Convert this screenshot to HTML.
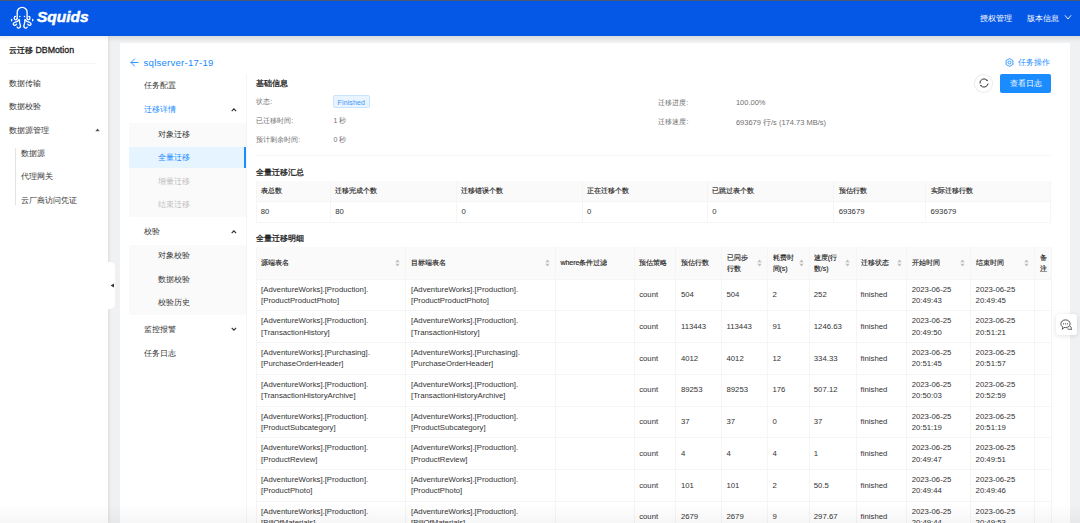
<!DOCTYPE html>
<html><head><meta charset="utf-8"><style>
*{box-sizing:border-box;margin:0;padding:0}
html,body{width:1080px;height:523px;overflow:hidden;background:#eff1f3;font-family:"Liberation Sans",sans-serif;color:#333}
.a{position:absolute;white-space:nowrap}
.vl{position:absolute;width:1px;background:#efefef}
.hl{position:absolute;height:1px;background:#efefef}
</style></head><body>
<div class="a" style="left:0.00px;top:0.00px;width:1080.00px;height:1.00px;background:#4a5878;"></div>
<div class="a" style="left:0.00px;top:1.00px;width:1080.00px;height:35.00px;background:#0558e6;"></div>
<svg class="a" style="left:8px;top:4px" width="30" height="28" viewBox="0 0 30 28" fill="none" stroke="#fff" stroke-width="1.35" stroke-linecap="round" stroke-linejoin="round">
<path d="M9.2 14.3 V8.3 A4.95 4.95 0 0 1 19.1 8.3 V14.3"/>
<circle cx="11.8" cy="12.6" r="0.75" fill="#fff" stroke="none"/><circle cx="16.5" cy="12.6" r="0.75" fill="#fff" stroke="none"/>
<path d="M9.2 14.3 C9.2 15.3 8.6 15.8 7.7 15.8 C6.9 15.8 6.3 15.1 6.3 14.1 C6.3 13.2 6.8 12.4 7.5 12.4"/>
<path d="M3.6 15.4 L3.6 16.8"/>
<path d="M10.9 15.8 C10.4 17.0 9.2 17.8 7.4 18.2 C5.8 18.6 5.0 19.5 5.3 20.4 C5.6 21.3 6.6 21.5 7.4 21.2 C8.1 20.9 8.4 20.5 8.5 20.1"/>
<path d="M11.5 15.9 C11.3 17.6 11.3 19.0 12.0 20.3 C12.6 21.5 12.6 23.0 11.6 23.8 C10.8 24.4 9.6 24.2 9.2 23.2"/>
<path d="M 19.10 14.30 C 19.10 15.30 19.70 15.80 20.60 15.80 C 21.40 15.80 22.00 15.10 22.00 14.10 C 22.00 13.20 21.50 12.40 20.80 12.40"/>
<path d="M 24.70 15.40 L 24.70 16.80"/>
<path d="M 17.40 15.80 C 17.90 17.00 19.10 17.80 20.90 18.20 C 22.50 18.60 23.30 19.50 23.00 20.40 C 22.70 21.30 21.70 21.50 20.90 21.20 C 20.20 20.90 19.90 20.50 19.80 20.10"/>
<path d="M 16.80 15.90 C 17.00 17.60 17.00 19.00 16.30 20.30 C 15.70 21.50 15.70 23.00 16.70 23.80 C 17.50 24.40 18.70 24.20 19.10 23.20"/>
</svg>
<div class="a" style="left:37px;top:7px;font-size:15.5px;line-height:20px;font-weight:700;font-style:italic;color:#fff;letter-spacing:0px;-webkit-text-stroke:0.5px #fff">Squids</div>
<div class="a" style="left:979.50px;top:14.07px;font-size:8.2px;line-height:10.25px;color:#fff;font-weight:400;">授权管理</div>
<div class="a" style="left:1026.50px;top:14.07px;font-size:8.2px;line-height:10.25px;color:#fff;font-weight:400;">版本信息</div>
<svg class="a" style="left:1064px;top:14px" width="8" height="7" viewBox="0 0 8 7"><path d="M0.9 1.3 L4 5 L7.1 1.3" stroke="#fff" stroke-width="0.9" fill="none"/></svg>
<div class="a" style="left:0.00px;top:36.00px;width:1080.00px;height:6.00px;background:linear-gradient(rgba(0,0,0,.09),rgba(0,0,0,0));"></div>
<div class="a" style="left:0;top:36px;width:108px;height:487px;background:#fff;box-shadow:1px 0 3px rgba(0,0,0,.09)"></div>
<div class="a" style="left:0.00px;top:36.00px;width:108.00px;height:5.00px;background:linear-gradient(rgba(0,0,0,.07),rgba(0,0,0,0));"></div>
<div class="a" style="left:9.20px;top:45.00px;font-size:8px;line-height:10.00px;color:#1f1f1f;font-weight:400;-webkit-text-stroke:0.3px #1f1f1f">云迁移 <span style='font-size:8.8px'>DBMotion</span></div>
<div class="a" style="left:9.20px;top:63.00px;width:86.80px;height:1.00px;background:#f5f5f5;"></div>
<div class="a" style="left:9.20px;top:78.50px;font-size:8px;line-height:10.00px;color:#333;font-weight:400;">数据传输</div>
<div class="a" style="left:9.20px;top:102.20px;font-size:8px;line-height:10.00px;color:#333;font-weight:400;">数据校验</div>
<div class="a" style="left:9.20px;top:125.60px;font-size:8px;line-height:10.00px;color:#333;font-weight:400;">数据源管理</div>
<svg class="a" style="left:94.5px;top:127.5px" width="5" height="4" viewBox="0 0 5 4"><path d="M0.3 3.2 L2.5 0.6 L4.7 3.2 Z" fill="#555"/></svg>
<div class="a" style="left:15.00px;top:147.50px;width:1.00px;height:57.50px;background:#e4e4e4;"></div>
<div class="a" style="left:21.00px;top:148.80px;font-size:8px;line-height:10.00px;color:#333;font-weight:400;">数据源</div>
<div class="a" style="left:21.00px;top:172.40px;font-size:8px;line-height:10.00px;color:#333;font-weight:400;">代理网关</div>
<div class="a" style="left:21.00px;top:195.60px;font-size:8px;line-height:10.00px;color:#333;font-weight:400;">云厂商访问凭证</div>
<div class="a" style="left:107px;top:262px;width:8px;height:47px;background:#fff;border-radius:0 5px 5px 0"></div>
<svg class="a" style="left:109.5px;top:283px" width="5" height="5" viewBox="0 0 5 5"><path d="M4 0.4 L0.6 2.5 L4 4.6 Z" fill="#333"/></svg>
<div class="a" style="left:120.00px;top:43.40px;width:950.00px;height:479.60px;background:#fff;"></div>
<svg class="a" style="left:129.5px;top:57.5px" width="9" height="9" viewBox="0 0 9 9" fill="none" stroke="#1a8cff" stroke-width="0.9" stroke-linecap="round"><path d="M8.1 4.5 H1.2 M4.5 1.0 L1.0 4.5 L4.5 8.0"/></svg>
<div class="a" style="left:143.60px;top:56.60px;font-size:9.6px;line-height:12.00px;color:#1a8cff;font-weight:400;letter-spacing:0.22px">sqlserver-17-19</div>
<div class="a" style="left:246.30px;top:74.30px;width:1.00px;height:448.70px;background:#f5f5f5;"></div>
<div class="a" style="left:143.60px;top:80.80px;font-size:8px;line-height:10.00px;color:#333;font-weight:400;">任务配置</div>
<div class="a" style="left:143.60px;top:105.20px;font-size:8px;line-height:10.00px;color:#1a8cff;font-weight:400;">迁移详情</div>
<svg class="a" style="left:230.5px;top:106.5px" width="6" height="6" viewBox="0 0 6 6"><path d="M0.7 4.1 L2.9 1.9 L5.1 4.1" stroke="#333" stroke-width="1.2" fill="none"/></svg>
<div class="a" style="left:129.20px;top:123.00px;width:117.10px;height:93.70px;background:#fafafa;"></div>
<div class="a" style="left:157.70px;top:129.70px;font-size:8px;line-height:10.00px;color:#333;font-weight:400;">对象迁移</div>
<div class="a" style="left:129.20px;top:146.50px;width:117.10px;height:21.10px;background:#e6f4ff;"></div>
<div class="a" style="left:244.30px;top:146.50px;width:2.00px;height:21.10px;background:#1a8cff;"></div>
<div class="a" style="left:157.70px;top:153.00px;font-size:8px;line-height:10.00px;color:#1a8cff;font-weight:400;">全量迁移</div>
<div class="a" style="left:157.70px;top:176.60px;font-size:8px;line-height:10.00px;color:#c0c0c0;font-weight:400;">增量迁移</div>
<div class="a" style="left:157.70px;top:199.90px;font-size:8px;line-height:10.00px;color:#c0c0c0;font-weight:400;">结束迁移</div>
<div class="a" style="left:143.90px;top:227.40px;font-size:8px;line-height:10.00px;color:#333;font-weight:400;">校验</div>
<svg class="a" style="left:230.5px;top:228.6px" width="6" height="6" viewBox="0 0 6 6"><path d="M0.7 4.1 L2.9 1.9 L5.1 4.1" stroke="#333" stroke-width="1.2" fill="none"/></svg>
<div class="a" style="left:129.20px;top:245.20px;width:117.10px;height:69.40px;background:#fafafa;"></div>
<div class="a" style="left:158.20px;top:251.30px;font-size:8px;line-height:10.00px;color:#333;font-weight:400;">对象校验</div>
<div class="a" style="left:158.20px;top:274.80px;font-size:8px;line-height:10.00px;color:#333;font-weight:400;">数据校验</div>
<div class="a" style="left:158.20px;top:297.70px;font-size:8px;line-height:10.00px;color:#333;font-weight:400;">校验历史</div>
<div class="a" style="left:143.90px;top:324.70px;font-size:8px;line-height:10.00px;color:#333;font-weight:400;">监控报警</div>
<svg class="a" style="left:230.5px;top:325.5px" width="6" height="6" viewBox="0 0 6 6"><path d="M0.7 1.9 L2.9 4.1 L5.1 1.9" stroke="#333" stroke-width="1.2" fill="none"/></svg>
<div class="a" style="left:143.90px;top:349.10px;font-size:8px;line-height:10.00px;color:#333;font-weight:400;">任务日志</div>
<div class="a" style="left:256.30px;top:79.20px;font-size:8px;line-height:10.00px;color:#1f1f1f;font-weight:400;-webkit-text-stroke:0.3px #1f1f1f">基础信息</div>
<div class="a" style="left:256.30px;top:98.42px;font-size:7px;line-height:8.75px;color:#707070;font-weight:400;">状态:</div>
<div class="a" style="left:256.30px;top:117.03px;font-size:7px;line-height:8.75px;color:#707070;font-weight:400;">已迁移时间:</div>
<div class="a" style="left:256.30px;top:135.62px;font-size:7px;line-height:8.75px;color:#707070;font-weight:400;">预计剩余时间:</div>
<div class="a" style="left:333px;top:95.3px;width:37px;height:12.5px;background:#e8f4ff;border:1px solid #c9e4ff;border-radius:2px"></div>
<div class="a" style="left:337.60px;top:98.53px;font-size:7px;line-height:8.75px;color:#3d95fb;font-weight:400;letter-spacing:0.12px">Finished</div>
<div class="a" style="left:333.50px;top:117.03px;font-size:7px;line-height:8.75px;color:#707070;font-weight:400;">1 秒</div>
<div class="a" style="left:333.50px;top:135.62px;font-size:7px;line-height:8.75px;color:#707070;font-weight:400;">0 秒</div>
<div class="a" style="left:658.40px;top:98.92px;font-size:7px;line-height:8.75px;color:#707070;font-weight:400;">迁移进度:</div>
<div class="a" style="left:735.90px;top:97.61px;font-size:7.5px;line-height:9.38px;color:#707070;font-weight:400;">100.00%</div>
<div class="a" style="left:658.40px;top:117.92px;font-size:7px;line-height:8.75px;color:#707070;font-weight:400;">迁移速度:</div>
<div class="a" style="left:735.90px;top:117.61px;font-size:7.5px;line-height:9.38px;color:#707070;font-weight:400;">693679 行/s (174.73 MB/s)</div>
<svg class="a" style="left:1004.5px;top:57.8px" width="9" height="9" viewBox="0 0 9 9" fill="none" stroke="#1a8cff" stroke-width="0.85">
<path d="M4.5 0.6 L7.9 2.5 L7.9 6.5 L4.5 8.4 L1.1 6.5 L1.1 2.5 Z"/><circle cx="4.5" cy="4.5" r="1.5"/></svg>
<div class="a" style="left:1018.30px;top:58.40px;font-size:8px;line-height:10.00px;color:#1a8cff;font-weight:400;">任务操作</div>
<div class="a" style="left:974.2px;top:74px;width:19.3px;height:18.6px;border:1px solid #ececec;border-radius:50%;background:#fff"></div>
<svg class="a" style="left:979px;top:78.4px" width="10" height="10" viewBox="0 0 10 10" fill="none" stroke="#2a2a2a" stroke-width="0.95">
<path d="M0.94 5.57 A4.1 4.1 0 0 1 8.23 2.48"/><path d="M9.06 5.57 A4.1 4.1 0 0 1 1.77 7.52"/>
<circle cx="8.13" cy="2.38" r="0.7" fill="#2a2a2a" stroke="none"/><circle cx="1.87" cy="7.62" r="0.7" fill="#2a2a2a" stroke="none"/></svg>
<div class="a" style="left:1000.2px;top:74.1px;width:50.6px;height:18.9px;background:#1a8cff;border-radius:2px"></div>
<div class="a" style="left:1009.70px;top:79.40px;font-size:8px;line-height:10.00px;color:#fff;font-weight:400;">查看日志</div>
<div class="a" style="left:256.00px;top:155.00px;width:795.00px;height:1.00px;background:#f5f5f5;"></div>
<div class="a" style="left:256.00px;top:168.00px;font-size:8px;line-height:10.00px;color:#1f1f1f;font-weight:400;-webkit-text-stroke:0.3px #1f1f1f">全量迁移汇总</div>
<div class="a" style="left:256.00px;top:181.00px;width:795.00px;height:20.70px;background:#fafafa;"></div>
<div class="a" style="left:256.00px;top:201.20px;width:795.00px;height:1.00px;background:#f5f5f5;"></div>
<div class="a" style="left:256.00px;top:221.60px;width:795.00px;height:1.00px;background:#f5f5f5;"></div>
<div class="a" style="left:256.00px;top:181.00px;width:1.00px;height:41.60px;background:#f5f5f5;"></div>
<div class="a" style="left:1050.00px;top:181.00px;width:1.00px;height:41.60px;background:#f5f5f5;"></div>
<div class="a" style="left:330.00px;top:181.00px;width:1.00px;height:41.60px;background:#f5f5f5;"></div>
<div class="a" style="left:456.10px;top:181.00px;width:1.00px;height:41.60px;background:#f5f5f5;"></div>
<div class="a" style="left:581.80px;top:181.00px;width:1.00px;height:41.60px;background:#f5f5f5;"></div>
<div class="a" style="left:707.00px;top:181.00px;width:1.00px;height:41.60px;background:#f5f5f5;"></div>
<div class="a" style="left:833.40px;top:181.00px;width:1.00px;height:41.60px;background:#f5f5f5;"></div>
<div class="a" style="left:925.20px;top:181.00px;width:1.00px;height:41.60px;background:#f5f5f5;"></div>
<div class="a" style="left:260.80px;top:187.22px;font-size:7px;line-height:8.75px;color:#262626;font-weight:400;-webkit-text-stroke:0.15px #262626">表总数</div>
<div class="a" style="left:260.80px;top:207.16px;font-size:7.75px;line-height:9.69px;color:#333;font-weight:400;">80</div>
<div class="a" style="left:335.30px;top:187.22px;font-size:7px;line-height:8.75px;color:#262626;font-weight:400;-webkit-text-stroke:0.15px #262626">迁移完成个数</div>
<div class="a" style="left:335.30px;top:207.16px;font-size:7.75px;line-height:9.69px;color:#333;font-weight:400;">80</div>
<div class="a" style="left:461.40px;top:187.22px;font-size:7px;line-height:8.75px;color:#262626;font-weight:400;-webkit-text-stroke:0.15px #262626">迁移错误个数</div>
<div class="a" style="left:461.40px;top:207.16px;font-size:7.75px;line-height:9.69px;color:#333;font-weight:400;">0</div>
<div class="a" style="left:587.10px;top:187.22px;font-size:7px;line-height:8.75px;color:#262626;font-weight:400;-webkit-text-stroke:0.15px #262626">正在迁移个数</div>
<div class="a" style="left:587.10px;top:207.16px;font-size:7.75px;line-height:9.69px;color:#333;font-weight:400;">0</div>
<div class="a" style="left:712.30px;top:187.22px;font-size:7px;line-height:8.75px;color:#262626;font-weight:400;-webkit-text-stroke:0.15px #262626">已跳过表个数</div>
<div class="a" style="left:712.30px;top:207.16px;font-size:7.75px;line-height:9.69px;color:#333;font-weight:400;">0</div>
<div class="a" style="left:838.70px;top:187.22px;font-size:7px;line-height:8.75px;color:#262626;font-weight:400;-webkit-text-stroke:0.15px #262626">预估行数</div>
<div class="a" style="left:838.70px;top:207.16px;font-size:7.75px;line-height:9.69px;color:#333;font-weight:400;">693679</div>
<div class="a" style="left:930.50px;top:187.22px;font-size:7px;line-height:8.75px;color:#262626;font-weight:400;-webkit-text-stroke:0.15px #262626">实际迁移行数</div>
<div class="a" style="left:930.50px;top:207.16px;font-size:7.75px;line-height:9.69px;color:#333;font-weight:400;">693679</div>
<div class="a" style="left:256.00px;top:234.00px;font-size:8px;line-height:10.00px;color:#1f1f1f;font-weight:400;-webkit-text-stroke:0.3px #1f1f1f">全量迁移明细</div>
<div class="a" style="left:256.00px;top:246.90px;width:795.00px;height:32.20px;background:#fafafa;"></div>
<div class="a" style="left:256.00px;top:278.60px;width:795.00px;height:1.00px;background:#f5f5f5;"></div>
<div class="a" style="left:256.00px;top:310.35px;width:795.00px;height:1.00px;background:#f5f5f5;"></div>
<div class="a" style="left:256.00px;top:342.10px;width:795.00px;height:1.00px;background:#f5f5f5;"></div>
<div class="a" style="left:256.00px;top:373.85px;width:795.00px;height:1.00px;background:#f5f5f5;"></div>
<div class="a" style="left:256.00px;top:405.60px;width:795.00px;height:1.00px;background:#f5f5f5;"></div>
<div class="a" style="left:256.00px;top:437.35px;width:795.00px;height:1.00px;background:#f5f5f5;"></div>
<div class="a" style="left:256.00px;top:469.10px;width:795.00px;height:1.00px;background:#f5f5f5;"></div>
<div class="a" style="left:256.00px;top:500.85px;width:795.00px;height:1.00px;background:#f5f5f5;"></div>
<div class="a" style="left:256.00px;top:532.60px;width:795.00px;height:1.00px;background:#f5f5f5;"></div>
<div class="a" style="left:255.50px;top:246.90px;width:1.00px;height:276.10px;background:#f5f5f5;"></div>
<div class="a" style="left:405.10px;top:246.90px;width:1.00px;height:276.10px;background:#f5f5f5;"></div>
<div class="a" style="left:555.10px;top:246.90px;width:1.00px;height:276.10px;background:#f5f5f5;"></div>
<div class="a" style="left:633.50px;top:246.90px;width:1.00px;height:276.10px;background:#f5f5f5;"></div>
<div class="a" style="left:675.10px;top:246.90px;width:1.00px;height:276.10px;background:#f5f5f5;"></div>
<div class="a" style="left:720.90px;top:246.90px;width:1.00px;height:276.10px;background:#f5f5f5;"></div>
<div class="a" style="left:766.80px;top:246.90px;width:1.00px;height:276.10px;background:#f5f5f5;"></div>
<div class="a" style="left:808.50px;top:246.90px;width:1.00px;height:276.10px;background:#f5f5f5;"></div>
<div class="a" style="left:855.90px;top:246.90px;width:1.00px;height:276.10px;background:#f5f5f5;"></div>
<div class="a" style="left:905.70px;top:246.90px;width:1.00px;height:276.10px;background:#f5f5f5;"></div>
<div class="a" style="left:969.60px;top:246.90px;width:1.00px;height:276.10px;background:#f5f5f5;"></div>
<div class="a" style="left:1033.50px;top:246.90px;width:1.00px;height:276.10px;background:#f5f5f5;"></div>
<div class="a" style="left:1050.50px;top:246.90px;width:1.00px;height:276.10px;background:#f5f5f5;"></div>
<div class="a" style="left:261.10px;top:259.12px;font-size:7px;line-height:8.75px;color:#262626;font-weight:400;-webkit-text-stroke:0.15px #262626">源端表名</div>
<svg class="a" style="left:394.9px;top:259.1px" width="5" height="8" viewBox="0 0 5 8"><path d="M0.3 3.3 L2.5 0.5 L4.7 3.3 Z M0.3 4.7 L2.5 7.5 L4.7 4.7 Z" fill="#bfbfbf"/></svg>
<div class="a" style="left:411.00px;top:259.12px;font-size:7px;line-height:8.75px;color:#262626;font-weight:400;-webkit-text-stroke:0.15px #262626">目标端表名</div>
<svg class="a" style="left:544.5px;top:259.1px" width="5" height="8" viewBox="0 0 5 8"><path d="M0.3 3.3 L2.5 0.5 L4.7 3.3 Z M0.3 4.7 L2.5 7.5 L4.7 4.7 Z" fill="#bfbfbf"/></svg>
<div class="a" style="left:560.40px;top:259.12px;font-size:7px;line-height:8.75px;color:#262626;font-weight:400;-webkit-text-stroke:0.15px #262626">where条件过滤</div>
<div class="a" style="left:639.20px;top:259.12px;font-size:7px;line-height:8.75px;color:#262626;font-weight:400;-webkit-text-stroke:0.15px #262626">预估策略</div>
<div class="a" style="left:680.90px;top:259.12px;font-size:7px;line-height:8.75px;color:#262626;font-weight:400;-webkit-text-stroke:0.15px #262626">预估行数</div>
<div class="a" style="left:726.50px;top:251.50px;font-size:7px;line-height:11.2px;color:#262626;-webkit-text-stroke:0.15px #262626">已同步<br>行数</div>
<svg class="a" style="left:757.1px;top:259.1px" width="5" height="8" viewBox="0 0 5 8"><path d="M0.3 3.3 L2.5 0.5 L4.7 3.3 Z M0.3 4.7 L2.5 7.5 L4.7 4.7 Z" fill="#bfbfbf"/></svg>
<div class="a" style="left:772.50px;top:251.50px;font-size:7px;line-height:11.2px;color:#262626;-webkit-text-stroke:0.15px #262626">耗费时<br>间(s)</div>
<svg class="a" style="left:798.5px;top:259.1px" width="5" height="8" viewBox="0 0 5 8"><path d="M0.3 3.3 L2.5 0.5 L4.7 3.3 Z M0.3 4.7 L2.5 7.5 L4.7 4.7 Z" fill="#bfbfbf"/></svg>
<div class="a" style="left:813.80px;top:251.50px;font-size:7px;line-height:11.2px;color:#262626;-webkit-text-stroke:0.15px #262626">速度(行<br>数/s)</div>
<svg class="a" style="left:845.4px;top:259.1px" width="5" height="8" viewBox="0 0 5 8"><path d="M0.3 3.3 L2.5 0.5 L4.7 3.3 Z M0.3 4.7 L2.5 7.5 L4.7 4.7 Z" fill="#bfbfbf"/></svg>
<div class="a" style="left:860.60px;top:259.12px;font-size:7px;line-height:8.75px;color:#262626;font-weight:400;-webkit-text-stroke:0.15px #262626">迁移状态</div>
<svg class="a" style="left:896.5px;top:259.1px" width="5" height="8" viewBox="0 0 5 8"><path d="M0.3 3.3 L2.5 0.5 L4.7 3.3 Z M0.3 4.7 L2.5 7.5 L4.7 4.7 Z" fill="#bfbfbf"/></svg>
<div class="a" style="left:911.70px;top:259.12px;font-size:7px;line-height:8.75px;color:#262626;font-weight:400;-webkit-text-stroke:0.15px #262626">开始时间</div>
<svg class="a" style="left:960.3px;top:259.1px" width="5" height="8" viewBox="0 0 5 8"><path d="M0.3 3.3 L2.5 0.5 L4.7 3.3 Z M0.3 4.7 L2.5 7.5 L4.7 4.7 Z" fill="#bfbfbf"/></svg>
<div class="a" style="left:975.60px;top:259.12px;font-size:7px;line-height:8.75px;color:#262626;font-weight:400;-webkit-text-stroke:0.15px #262626">结束时间</div>
<svg class="a" style="left:1024.2px;top:259.1px" width="5" height="8" viewBox="0 0 5 8"><path d="M0.3 3.3 L2.5 0.5 L4.7 3.3 Z M0.3 4.7 L2.5 7.5 L4.7 4.7 Z" fill="#bfbfbf"/></svg>
<div class="a" style="left:1039.50px;top:251.50px;font-size:7px;line-height:11.2px;color:#262626;-webkit-text-stroke:0.15px #262626">备<br>注</div>
<div class="a" style="left:261.10px;top:283.68px;font-size:7.75px;line-height:11.2px;color:#333">[AdventureWorks].[Production].<br>[ProductProductPhoto]</div>
<div class="a" style="left:411.00px;top:283.68px;font-size:7.75px;line-height:11.2px;color:#333">[AdventureWorks].[Production].<br>[ProductProductPhoto]</div>
<div class="a" style="left:639.20px;top:290.03px;font-size:7.75px;line-height:9.69px;color:#333;font-weight:400;">count</div>
<div class="a" style="left:680.90px;top:290.03px;font-size:7.75px;line-height:9.69px;color:#333;font-weight:400;">504</div>
<div class="a" style="left:726.50px;top:290.03px;font-size:7.75px;line-height:9.69px;color:#333;font-weight:400;">504</div>
<div class="a" style="left:772.50px;top:290.03px;font-size:7.75px;line-height:9.69px;color:#333;font-weight:400;">2</div>
<div class="a" style="left:813.80px;top:290.03px;font-size:7.75px;line-height:9.69px;color:#333;font-weight:400;">252</div>
<div class="a" style="left:860.60px;top:290.03px;font-size:7.75px;line-height:9.69px;color:#333;font-weight:400;">finished</div>
<div class="a" style="left:911.70px;top:283.68px;font-size:7.75px;line-height:11.2px;color:#333">2023-06-25<br>20:49:43</div>
<div class="a" style="left:975.60px;top:283.68px;font-size:7.75px;line-height:11.2px;color:#333">2023-06-25<br>20:49:45</div>
<div class="a" style="left:261.10px;top:315.43px;font-size:7.75px;line-height:11.2px;color:#333">[AdventureWorks].[Production].<br>[TransactionHistory]</div>
<div class="a" style="left:411.00px;top:315.43px;font-size:7.75px;line-height:11.2px;color:#333">[AdventureWorks].[Production].<br>[TransactionHistory]</div>
<div class="a" style="left:639.20px;top:321.78px;font-size:7.75px;line-height:9.69px;color:#333;font-weight:400;">count</div>
<div class="a" style="left:680.90px;top:321.78px;font-size:7.75px;line-height:9.69px;color:#333;font-weight:400;">113443</div>
<div class="a" style="left:726.50px;top:321.78px;font-size:7.75px;line-height:9.69px;color:#333;font-weight:400;">113443</div>
<div class="a" style="left:772.50px;top:321.78px;font-size:7.75px;line-height:9.69px;color:#333;font-weight:400;">91</div>
<div class="a" style="left:813.80px;top:321.78px;font-size:7.75px;line-height:9.69px;color:#333;font-weight:400;">1246.63</div>
<div class="a" style="left:860.60px;top:321.78px;font-size:7.75px;line-height:9.69px;color:#333;font-weight:400;">finished</div>
<div class="a" style="left:911.70px;top:315.43px;font-size:7.75px;line-height:11.2px;color:#333">2023-06-25<br>20:49:50</div>
<div class="a" style="left:975.60px;top:315.43px;font-size:7.75px;line-height:11.2px;color:#333">2023-06-25<br>20:51:21</div>
<div class="a" style="left:261.10px;top:347.18px;font-size:7.75px;line-height:11.2px;color:#333">[AdventureWorks].[Purchasing].<br>[PurchaseOrderHeader]</div>
<div class="a" style="left:411.00px;top:347.18px;font-size:7.75px;line-height:11.2px;color:#333">[AdventureWorks].[Purchasing].<br>[PurchaseOrderHeader]</div>
<div class="a" style="left:639.20px;top:353.53px;font-size:7.75px;line-height:9.69px;color:#333;font-weight:400;">count</div>
<div class="a" style="left:680.90px;top:353.53px;font-size:7.75px;line-height:9.69px;color:#333;font-weight:400;">4012</div>
<div class="a" style="left:726.50px;top:353.53px;font-size:7.75px;line-height:9.69px;color:#333;font-weight:400;">4012</div>
<div class="a" style="left:772.50px;top:353.53px;font-size:7.75px;line-height:9.69px;color:#333;font-weight:400;">12</div>
<div class="a" style="left:813.80px;top:353.53px;font-size:7.75px;line-height:9.69px;color:#333;font-weight:400;">334.33</div>
<div class="a" style="left:860.60px;top:353.53px;font-size:7.75px;line-height:9.69px;color:#333;font-weight:400;">finished</div>
<div class="a" style="left:911.70px;top:347.18px;font-size:7.75px;line-height:11.2px;color:#333">2023-06-25<br>20:51:45</div>
<div class="a" style="left:975.60px;top:347.18px;font-size:7.75px;line-height:11.2px;color:#333">2023-06-25<br>20:51:57</div>
<div class="a" style="left:261.10px;top:378.93px;font-size:7.75px;line-height:11.2px;color:#333">[AdventureWorks].[Production].<br>[TransactionHistoryArchive]</div>
<div class="a" style="left:411.00px;top:378.93px;font-size:7.75px;line-height:11.2px;color:#333">[AdventureWorks].[Production].<br>[TransactionHistoryArchive]</div>
<div class="a" style="left:639.20px;top:385.28px;font-size:7.75px;line-height:9.69px;color:#333;font-weight:400;">count</div>
<div class="a" style="left:680.90px;top:385.28px;font-size:7.75px;line-height:9.69px;color:#333;font-weight:400;">89253</div>
<div class="a" style="left:726.50px;top:385.28px;font-size:7.75px;line-height:9.69px;color:#333;font-weight:400;">89253</div>
<div class="a" style="left:772.50px;top:385.28px;font-size:7.75px;line-height:9.69px;color:#333;font-weight:400;">176</div>
<div class="a" style="left:813.80px;top:385.28px;font-size:7.75px;line-height:9.69px;color:#333;font-weight:400;">507.12</div>
<div class="a" style="left:860.60px;top:385.28px;font-size:7.75px;line-height:9.69px;color:#333;font-weight:400;">finished</div>
<div class="a" style="left:911.70px;top:378.93px;font-size:7.75px;line-height:11.2px;color:#333">2023-06-25<br>20:50:03</div>
<div class="a" style="left:975.60px;top:378.93px;font-size:7.75px;line-height:11.2px;color:#333">2023-06-25<br>20:52:59</div>
<div class="a" style="left:261.10px;top:410.68px;font-size:7.75px;line-height:11.2px;color:#333">[AdventureWorks].[Production].<br>[ProductSubcategory]</div>
<div class="a" style="left:411.00px;top:410.68px;font-size:7.75px;line-height:11.2px;color:#333">[AdventureWorks].[Production].<br>[ProductSubcategory]</div>
<div class="a" style="left:639.20px;top:417.03px;font-size:7.75px;line-height:9.69px;color:#333;font-weight:400;">count</div>
<div class="a" style="left:680.90px;top:417.03px;font-size:7.75px;line-height:9.69px;color:#333;font-weight:400;">37</div>
<div class="a" style="left:726.50px;top:417.03px;font-size:7.75px;line-height:9.69px;color:#333;font-weight:400;">37</div>
<div class="a" style="left:772.50px;top:417.03px;font-size:7.75px;line-height:9.69px;color:#333;font-weight:400;">0</div>
<div class="a" style="left:813.80px;top:417.03px;font-size:7.75px;line-height:9.69px;color:#333;font-weight:400;">37</div>
<div class="a" style="left:860.60px;top:417.03px;font-size:7.75px;line-height:9.69px;color:#333;font-weight:400;">finished</div>
<div class="a" style="left:911.70px;top:410.68px;font-size:7.75px;line-height:11.2px;color:#333">2023-06-25<br>20:51:19</div>
<div class="a" style="left:975.60px;top:410.68px;font-size:7.75px;line-height:11.2px;color:#333">2023-06-25<br>20:51:19</div>
<div class="a" style="left:261.10px;top:442.43px;font-size:7.75px;line-height:11.2px;color:#333">[AdventureWorks].[Production].<br>[ProductReview]</div>
<div class="a" style="left:411.00px;top:442.43px;font-size:7.75px;line-height:11.2px;color:#333">[AdventureWorks].[Production].<br>[ProductReview]</div>
<div class="a" style="left:639.20px;top:448.78px;font-size:7.75px;line-height:9.69px;color:#333;font-weight:400;">count</div>
<div class="a" style="left:680.90px;top:448.78px;font-size:7.75px;line-height:9.69px;color:#333;font-weight:400;">4</div>
<div class="a" style="left:726.50px;top:448.78px;font-size:7.75px;line-height:9.69px;color:#333;font-weight:400;">4</div>
<div class="a" style="left:772.50px;top:448.78px;font-size:7.75px;line-height:9.69px;color:#333;font-weight:400;">4</div>
<div class="a" style="left:813.80px;top:448.78px;font-size:7.75px;line-height:9.69px;color:#333;font-weight:400;">1</div>
<div class="a" style="left:860.60px;top:448.78px;font-size:7.75px;line-height:9.69px;color:#333;font-weight:400;">finished</div>
<div class="a" style="left:911.70px;top:442.43px;font-size:7.75px;line-height:11.2px;color:#333">2023-06-25<br>20:49:47</div>
<div class="a" style="left:975.60px;top:442.43px;font-size:7.75px;line-height:11.2px;color:#333">2023-06-25<br>20:49:51</div>
<div class="a" style="left:261.10px;top:474.18px;font-size:7.75px;line-height:11.2px;color:#333">[AdventureWorks].[Production].<br>[ProductPhoto]</div>
<div class="a" style="left:411.00px;top:474.18px;font-size:7.75px;line-height:11.2px;color:#333">[AdventureWorks].[Production].<br>[ProductPhoto]</div>
<div class="a" style="left:639.20px;top:480.53px;font-size:7.75px;line-height:9.69px;color:#333;font-weight:400;">count</div>
<div class="a" style="left:680.90px;top:480.53px;font-size:7.75px;line-height:9.69px;color:#333;font-weight:400;">101</div>
<div class="a" style="left:726.50px;top:480.53px;font-size:7.75px;line-height:9.69px;color:#333;font-weight:400;">101</div>
<div class="a" style="left:772.50px;top:480.53px;font-size:7.75px;line-height:9.69px;color:#333;font-weight:400;">2</div>
<div class="a" style="left:813.80px;top:480.53px;font-size:7.75px;line-height:9.69px;color:#333;font-weight:400;">50.5</div>
<div class="a" style="left:860.60px;top:480.53px;font-size:7.75px;line-height:9.69px;color:#333;font-weight:400;">finished</div>
<div class="a" style="left:911.70px;top:474.18px;font-size:7.75px;line-height:11.2px;color:#333">2023-06-25<br>20:49:44</div>
<div class="a" style="left:975.60px;top:474.18px;font-size:7.75px;line-height:11.2px;color:#333">2023-06-25<br>20:49:46</div>
<div class="a" style="left:261.10px;top:505.93px;font-size:7.75px;line-height:11.2px;color:#333">[AdventureWorks].[Production].<br>[BillOfMaterials]</div>
<div class="a" style="left:411.00px;top:505.93px;font-size:7.75px;line-height:11.2px;color:#333">[AdventureWorks].[Production].<br>[BillOfMaterials]</div>
<div class="a" style="left:639.20px;top:512.28px;font-size:7.75px;line-height:9.69px;color:#333;font-weight:400;">count</div>
<div class="a" style="left:680.90px;top:512.28px;font-size:7.75px;line-height:9.69px;color:#333;font-weight:400;">2679</div>
<div class="a" style="left:726.50px;top:512.28px;font-size:7.75px;line-height:9.69px;color:#333;font-weight:400;">2679</div>
<div class="a" style="left:772.50px;top:512.28px;font-size:7.75px;line-height:9.69px;color:#333;font-weight:400;">9</div>
<div class="a" style="left:813.80px;top:512.28px;font-size:7.75px;line-height:9.69px;color:#333;font-weight:400;">297.67</div>
<div class="a" style="left:860.60px;top:512.28px;font-size:7.75px;line-height:9.69px;color:#333;font-weight:400;">finished</div>
<div class="a" style="left:911.70px;top:505.93px;font-size:7.75px;line-height:11.2px;color:#333">2023-06-25<br>20:49:44</div>
<div class="a" style="left:975.60px;top:505.93px;font-size:7.75px;line-height:11.2px;color:#333">2023-06-25<br>20:49:53</div>
<div class="a" style="left:1055.7px;top:314.4px;width:21px;height:20.3px;background:#fff;border-radius:3px;box-shadow:0 1px 5px rgba(0,0,0,.12)"></div>
<svg class="a" style="left:1059px;top:318px" width="14" height="14" viewBox="0 0 14 14" fill="none" stroke="#3a3a3a" stroke-width="0.85" stroke-linejoin="round">
<path d="M3.9 9.1 C2.6 8.4 1.9 7.1 1.9 5.8 C1.9 3.5 3.9 1.9 6.5 1.9 C9.1 1.9 11.1 3.5 11.1 5.8 C11.1 8.1 9.1 9.6 6.5 9.6 C6 9.6 5.5 9.55 5.1 9.45 L3.3 11.3 Z"/>
<circle cx="4.5" cy="5.8" r="0.6" fill="#3a3a3a" stroke="none"/><circle cx="6.5" cy="5.8" r="0.6" fill="#3a3a3a" stroke="none"/><circle cx="8.5" cy="5.8" r="0.6" fill="#3a3a3a" stroke="none"/>
<path d="M10.7 8.2 C11.9 8.6 12.5 9.5 12.3 10.6 L12.5 11.6 L11.4 11.2 C10.4 11.6 9.2 11.4 8.4 10.6"/></svg>
<div class="a" style="left:0.00px;top:503.00px;width:1080.00px;height:20.00px;background:linear-gradient(rgba(0,0,0,0),rgba(0,0,0,.035));"></div>
</body></html>
